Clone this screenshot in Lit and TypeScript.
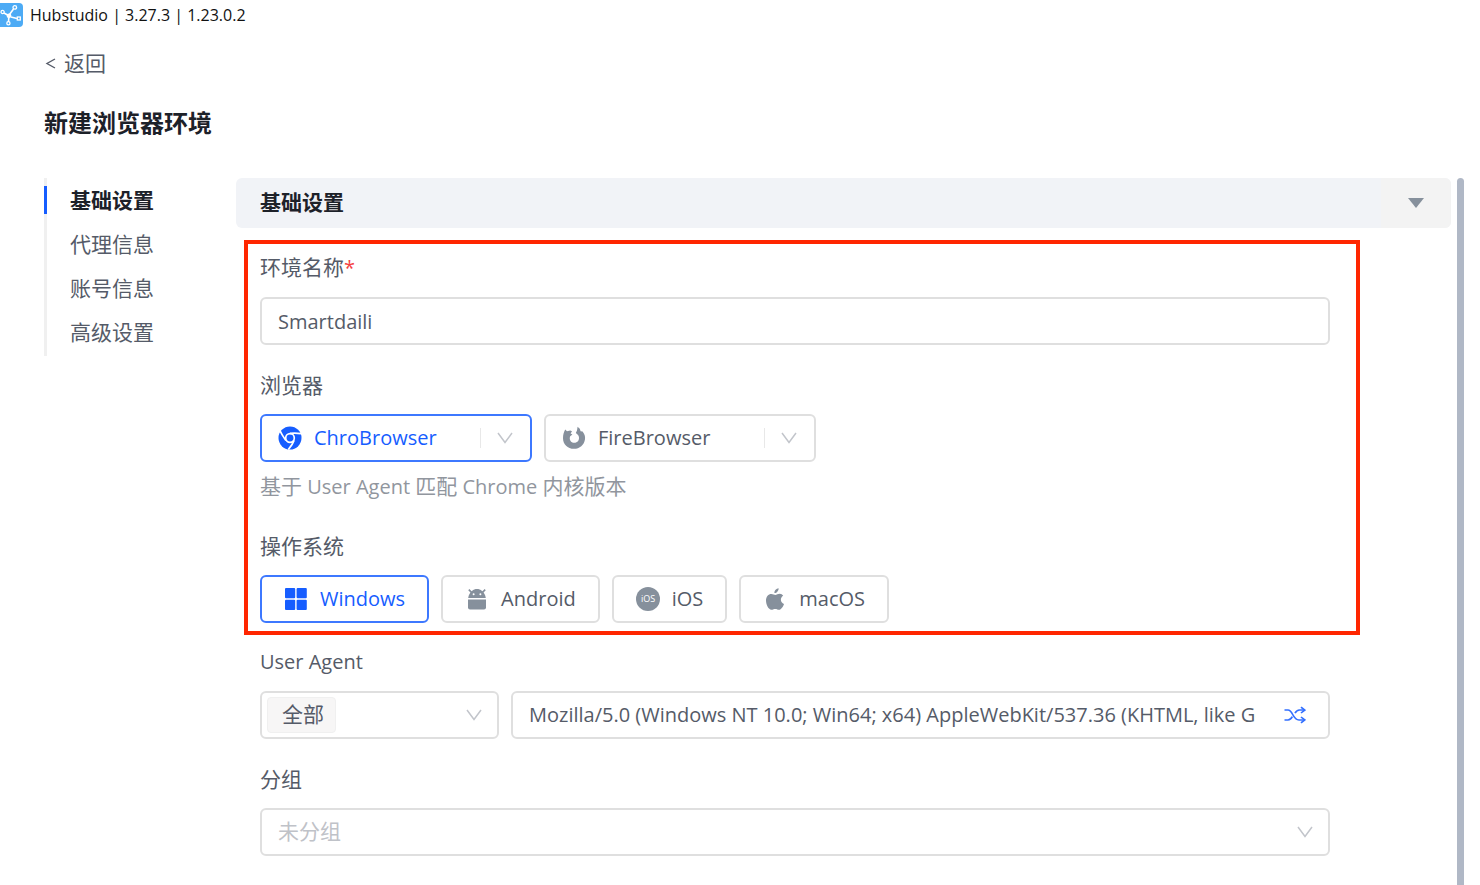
import { LitElement, html, css, svg } from "lit";
import { customElement, state } from "lit/decorators.js";
import { classMap } from "lit/directives/class-map.js";

const chevron = html`<svg class="chevron" viewBox="0 0 16 12" aria-hidden="true">
  <path d="M1 1 L8 10.5 L15 1" fill="none" stroke="currentColor" stroke-width="1.5" />
</svg>`;

const logo = html`<svg class="logo" viewBox="0 0 23 24" aria-hidden="true">
  <rect x="-4" y="0" width="27" height="24" rx="4" fill="#4dabf5" />
  <g fill="none" stroke="#fff" stroke-width="1.3">
    <path d="M4 10 L8.5 12.5 M9.5 11.5 L13.5 6 M11 14 L17 15.5 M8.8 14.5 L8.5 19" stroke-width="1.6" />
    <circle cx="2.6" cy="9" r="1.6" />
    <circle cx="14.8" cy="4.4" r="1.8" />
    <circle cx="8.4" cy="20.3" r="1.6" />
    <rect x="17.3" y="14" width="3" height="3" />
  </g>
  <circle cx="9" cy="12.8" r="2.4" fill="#fff" />
</svg>`;

const icons = {
  chrome: svg`
    <circle cx="12" cy="12" r="11.5" fill="currentColor" />
    <circle cx="12" cy="12" r="4.3" fill="none" stroke="#fff" stroke-width="1.7" />
    <g fill="none" stroke="#fff" stroke-width="1.7">
      <path d="M12 7.3 C16 6.8 19.5 7 23 7.6" />
      <path d="M7.9 14.4 C5.8 11.5 3.6 8.4 2.2 5" />
      <path d="M16.1 14.4 C14.8 18 12.8 20.7 10.3 23.6" />
    </g>`,
  fire: svg`
    <path fill="currentColor" d="M3.2 3.4 L5 5.2 L8.2 4.6 L10 5.2 L8.6 7.4 L10.4 8.6 L8.2 10.2 C6.8 13.6 9 16.8 12.2 16.8 C15.6 16.8 17.8 13.6 16.8 10.4 C16.2 8.8 15 7.8 13.8 7 L15 4.6 L15.6 0.8 L17.8 2.8 L18.6 5.2 L20.6 5.4 C22.6 8 23.4 10.4 23 13.2 C22.2 19 17.6 22.8 12 22.8 C5.6 22.8 1 18.2 1 12.2 C1 8.6 1.8 6.2 3.2 3.4 Z" />`,
  windows: svg`
    <g fill="currentColor">
      <rect x="1" y="1" width="10.2" height="10.2" rx="1" />
      <rect x="12.6" y="1" width="10.2" height="10.2" rx="1" />
      <rect x="1" y="12.8" width="10.2" height="10.2" rx="1" />
      <rect x="12.6" y="12.8" width="10.2" height="10.2" rx="1" />
    </g>`,
  android: svg`
    <path d="M3.2 11 C3.6 8 5 5.6 7 4 C9.8 1.4 14.2 1.4 17 4 C19 5.6 20.4 8 20.8 11 Z" fill="currentColor" />
    <path d="M3.8 2.6 L6.8 5.6 M20.2 2.6 L17.2 5.6" stroke="currentColor" stroke-width="1.6" />
    <circle cx="8.6" cy="7.2" r="1" fill="#fff" />
    <circle cx="15.4" cy="7.2" r="1" fill="#fff" />
    <path d="M3 12.4 H21 V20.4 Q21 22.4 19 22.4 H5 Q3 22.4 3 20.4 Z" fill="currentColor" />`,
  ios: svg`
    <circle cx="12" cy="12" r="12" fill="currentColor" />
    <text x="12" y="15" text-anchor="middle" font-size="9" font-family="Open Sans, sans-serif" fill="#fff">iOS</text>`,
  apple: svg`
    <path fill="currentColor" d="M15.6 1.2 C15.8 3.8 13.6 6.2 11.4 6 C11.2 3.6 13.4 1.4 15.6 1.2 Z M20.2 8.8 C16.8 10.8 17.2 15.4 21 17 C20.2 19.4 18.2 22.8 16 22.8 C14.6 22.8 14 22 12.2 22 C10.4 22 9.8 22.8 8.4 22.8 C5.6 22.8 3 17.8 3 13.6 C3 9.6 5.4 7 8.4 7 C10 7 11.2 8 12.4 8 C13.4 8 15 6.8 16.8 6.8 C18.2 6.8 19.4 7.6 20.2 8.8 Z" />`,
};

type IconName = keyof typeof icons;

const icon = (name: IconName) =>
  html`<svg class="icon" viewBox="0 0 24 24" aria-hidden="true">${icons[name]}</svg>`;

const SECTIONS = ["基础设置", "代理信息", "账号信息", "高级设置"];

const BROWSERS: { name: string; icon: IconName }[] = [
  { name: "ChroBrowser", icon: "chrome" },
  { name: "FireBrowser", icon: "fire" },
];

const SYSTEMS: { name: string; icon: IconName }[] = [
  { name: "Windows", icon: "windows" },
  { name: "Android", icon: "android" },
  { name: "iOS", icon: "ios" },
  { name: "macOS", icon: "apple" },
];

@customElement("app-root")
export class AppRoot extends LitElement {
  @state() private section = SECTIONS[0];
  @state() private browser = BROWSERS[0].name;
  @state() private system = SYSTEMS[0].name;

  static styles = css`
    :host {
      --blue: #165dff;
      --text: #555b68;
      --strong: #1d2129;
      --line: #dfdfdf;
      --icon: #86909c;
      display: flex;
      flex-direction: column;
      height: 100vh;
      overflow: hidden;
      background: #fff;
      color: var(--text);
      font-family: "Open Sans", "Noto Sans CJK SC", sans-serif;
      font-size: 21px;
      line-height: 28px;
    }
    * {
      box-sizing: border-box;
    }
    button,
    input,
    select {
      font: inherit;
      color: inherit;
      border: 0;
      padding: 0;
      margin: 0;
      background: none;
      outline: none;
    }
    h1,
    h2,
    p,
    ul,
    fieldset,
    legend {
      margin: 0;
      padding: 0;
      border: 0;
      min-width: 0;
    }
    .titlebar {
      display: flex;
      align-items: center;
      gap: 7px;
      padding: 3px 0;
      font-size: 16px;
      line-height: 24px;
      color: #111;
    }
    .logo {
      width: 23px;
      height: 24px;
    }
    .head {
      display: flex;
      flex-direction: column;
      align-items: flex-start;
      gap: 28px;
      padding: 19px 44px 37px;
    }
    .back {
      display: flex;
      align-items: center;
      gap: 8px;
      color: var(--text);
      text-decoration: none;
    }
    .back svg {
      width: 12px;
      height: 12px;
    }
    h1 {
      font-size: 24px;
      line-height: 36px;
      font-weight: 700;
      color: var(--strong);
    }
    .body {
      flex: 1;
      display: flex;
      min-height: 0;
      padding: 0 16px 0 44px;
    }
    .nav ul {
      display: grid;
      grid-auto-rows: 1fr;
      height: 178px;
      padding-bottom: 2px;
      list-style: none;
      border-left: 3px solid #f0f0f0;
    }
    .nav {
      width: 192px;
    }
    .nav li {
      display: flex;
      align-items: center;
    }
    .nav a {
      display: block;
      margin-left: -3px;
      padding-left: 23px;
      border-left: 3px solid transparent;
      color: var(--text);
      text-decoration: none;
    }
    .nav a.active {
      border-color: var(--blue);
      color: var(--strong);
      font-weight: 700;
    }
    .panel {
      flex: 1;
      min-width: 0;
    }
    .panel-head {
      display: flex;
      align-items: stretch;
      justify-content: space-between;
      height: 50px;
      padding-left: 24px;
      border-radius: 6px;
      background: #f1f3f7;
      overflow: hidden;
    }
    .panel-head h2 {
      font-size: 21px;
      line-height: 48px;
      font-weight: 700;
      color: var(--strong);
    }
    .collapse {
      display: grid;
      place-items: center;
      width: 70px;
      background: #f3f3f3;
      color: var(--icon);
    }
    .collapse svg {
      width: 16px;
      height: 10px;
    }
    .marked {
      margin: 12px 91px 0 8px;
      padding: 10px 26px 8px 12px;
      border: 4px solid #ff2600;
    }
    .plain {
      margin: 14px 121px 0 24px;
    }
    .stack {
      display: flex;
      flex-direction: column;
      gap: 27px;
    }
    .field {
      display: flex;
      flex-direction: column;
      gap: 16px;
    }
    .label {
      display: block;
      line-height: 26px;
    }
    legend.label {
      margin-bottom: 16px;
    }
    .latin {
      font-size: 20px;
    }
    .required {
      color: #f53f3f;
      font-size: 20px;
    }
    .row {
      display: flex;
      gap: 12px;
    }
    .control {
      display: flex;
      align-items: center;
      height: 48px;
      border: 2px solid var(--line);
      border-radius: 6px;
      font-size: 20px;
      background: #fff;
    }
    .text {
      width: 100%;
      padding: 0 16px;
    }
    .hint {
      margin: 10px 0 5px;
      color: #91969e;
      font-size: 20px;
    }
    .hint .cjk {
      font-size: 21px;
    }
    .control.on {
      border-color: #3d78ff;
      color: var(--blue);
    }
    .control.on .icon {
      color: var(--blue);
    }
    .pick {
      display: flex;
      align-items: center;
      gap: 12px;
      cursor: pointer;
    }
    .pick input {
      appearance: none;
      width: 0;
      height: 0;
      margin-right: -12px;
    }
    .icon {
      width: 24px;
      height: 24px;
      color: var(--icon);
    }
    .browser {
      width: 272px;
    }
    .browser .pick {
      flex: 1;
      padding-left: 16px;
    }
    .open {
      display: grid;
      place-items: center;
      width: 50px;
      height: 20px;
      padding-right: 2px;
      border-left: 1px solid #e8e8e8;
    }
    .chevron {
      width: 16px;
      height: 12px;
      color: #c2c5cb;
    }
    .system {
      padding: 0 22px;
    }
    .drop {
      display: grid;
      grid-template-columns: 1fr;
      align-items: center;
    }
    .drop > * {
      grid-area: 1 / 1;
    }
    .drop .chevron {
      justify-self: end;
      margin-right: 15px;
      pointer-events: none;
    }
    .drop select {
      appearance: none;
      width: 100%;
      height: 44px;
      padding: 0 48px 2px 16px;
      font-size: 21px;
    }
    .drop .placeholder {
      color: #bfc2c8;
    }
    .range {
      flex: 0 0 239px;
    }
    .range select {
      padding-left: 20px;
    }
    .tag {
      width: 69px;
      height: 36px;
      margin-left: 5px;
      border: 1px solid #f0f0f0;
      border-radius: 4px;
      background: #f7f6f6;
    }
    .agent {
      flex: 1;
      min-width: 0;
      padding: 0 22px 0 16px;
      gap: 28px;
    }
    .agent input {
      flex: 1;
      min-width: 0;
    }
    .shuffle {
      display: grid;
      color: #3370ff;
    }
    .shuffle svg {
      width: 22px;
      height: 18px;
    }
    .thumb {
      width: 7px;
      margin-left: 6px;
      border-radius: 4px 4px 0 0;
      background: #b0b8c6;
    }
  `;

  private browserControl(item: { name: string; icon: IconName }) {
    const on = item.name === this.browser;
    return html`<div class=${classMap({ control: true, browser: true, on })}>
      <label class="pick">
        <input type="radio" name="browser" .checked=${on} @change=${() => (this.browser = item.name)} />
        ${icon(item.icon)}<span>${item.name}</span>
      </label>
      <button class="open" type="button" aria-label=${item.name}>${chevron}</button>
    </div>`;
  }

  private systemControl(item: { name: string; icon: IconName }) {
    const on = item.name === this.system;
    return html`<label class=${classMap({ control: true, pick: true, system: true, on })}>
      <input type="radio" name="system" .checked=${on} @change=${() => (this.system = item.name)} />
      ${icon(item.icon)}<span>${item.name}</span>
    </label>`;
  }

  render() {
    return html`
      <header class="titlebar">${logo}<span>Hubstudio | 3.27.3 | 1.23.0.2</span></header>
      <div class="head">
        <a class="back" href="#">
          <svg viewBox="0 0 12 12" aria-hidden="true">
            <path d="M11 2 L3 6.5 L11 11" fill="none" stroke="currentColor" stroke-width="1.4" />
          </svg>
          <span>返回</span>
        </a>
        <h1>新建浏览器环境</h1>
      </div>
      <div class="body">
        <nav class="nav">
          <ul>
            ${SECTIONS.map(
              (name) => html`<li>
                <a href="#" class=${classMap({ active: name === this.section })} @click=${() => (this.section = name)}>${name}</a>
              </li>`
            )}
          </ul>
        </nav>
        <main class="panel">
          <div class="panel-head">
            <h2>基础设置</h2>
            <button class="collapse" type="button" aria-label="基础设置">
              <svg viewBox="0 0 16 10" aria-hidden="true"><path d="M0 0 H16 L8 10 Z" fill="currentColor" /></svg>
            </button>
          </div>
          <div class="marked stack">
            <div class="field">
              <label class="label" for="name">环境名称<span class="required">*</span></label>
              <input class="control text" id="name" type="text" value="Smartdaili" />
            </div>
            <fieldset>
              <legend class="label">浏览器</legend>
              <div class="row">${BROWSERS.map((b) => this.browserControl(b))}</div>
              <p class="hint"><span class="cjk">基于</span> User Agent <span class="cjk">匹配</span> Chrome <span class="cjk">内核版本</span></p>
            </fieldset>
            <fieldset>
              <legend class="label">操作系统</legend>
              <div class="row">${SYSTEMS.map((s) => this.systemControl(s))}</div>
            </fieldset>
          </div>
          <div class="plain stack">
            <div class="field">
              <label class="label latin" for="agent">User Agent</label>
              <div class="row">
                <div class="control drop range">
                  <span class="tag"></span>
                  <select aria-label="User Agent"><option>全部</option></select>
                  ${chevron}
                </div>
                <div class="control agent">
                  <input id="agent" type="text" value="Mozilla/5.0 (Windows NT 10.0; Win64; x64) AppleWebKit/537.36 (KHTML, like Gecko) Chrome" />
                  <button class="shuffle" type="button" aria-label="User Agent">
                    <svg viewBox="0 0 22 20" preserveAspectRatio="none" aria-hidden="true">
                      <g fill="none" stroke="currentColor" stroke-width="1.7">
                        <path d="M0.5 4.5 H4 C9 4.5 8.5 15.5 15 15.5 H20.5" />
                        <path d="M0.5 15.5 H4 C6.5 15.5 7.5 13.5 8.3 11.8 M11 8 C12 6 13 4.5 15.5 4.5 H20.5" />
                        <path d="M17 1.2 L20.8 4.5 L17 7.8 M17 12.2 L20.8 15.5 L17 18.8" />
                      </g>
                    </svg>
                  </button>
                </div>
              </div>
            </div>
            <div class="field">
              <label class="label" for="group">分组</label>
              <div class="control drop">
                <select class="placeholder" id="group"><option>未分组</option></select>
                ${chevron}
              </div>
            </div>
          </div>
        </main>
        <div class="thumb"></div>
      </div>
    `;
  }
}
